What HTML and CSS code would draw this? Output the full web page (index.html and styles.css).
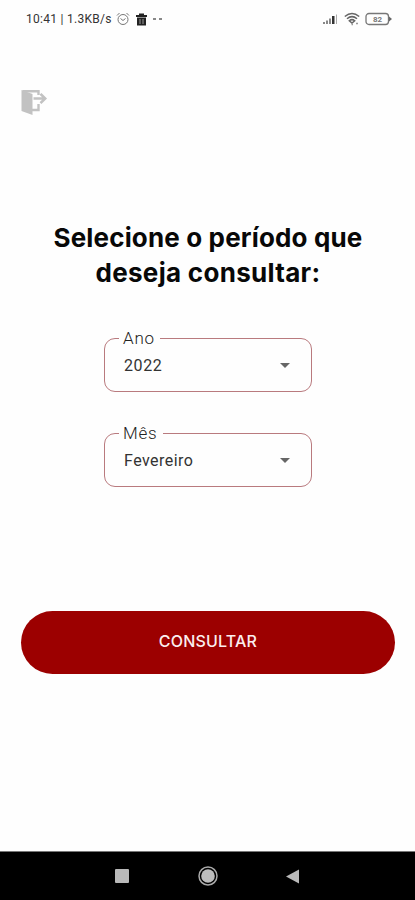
FILE: index.html
```html
<!DOCTYPE html>
<html lang="pt-BR">
<head>
<meta charset="utf-8">
<meta name="viewport" content="width=device-width, initial-scale=1">
<title>Consultar período</title>
<link rel="stylesheet" href="styles.css">
</head>
<body>
<div class="screen">
  <header class="status">
    <span class="clock">10:41 | 1.3KB/s</span>
    <svg class="alarm" width="14" height="14" viewBox="0 0 14 14" fill="none" stroke="#777" stroke-width="1"><circle cx="7" cy="7.5" r="5"/><path d="M1 3.5 3.5 1M13 3.5 10.5 1M4.5 6.5 7 8.5 9.5 6.5"/></svg>
    <svg class="trash" width="11" height="13" viewBox="0 0 11 13"><path fill="#222" d="M0 2h3V.5h5V2h3v2H0zM1 4.500h9V12.500H1z"/><path stroke="#999" d="M4 6v5M7 6v5"/></svg>
    <span class="dots"><i></i><i></i></span>
    <span class="grow"></span>
    <svg width="16" height="12" viewBox="0 0 16 12"><path fill="#888" d="M1 9h2v2H1zM4 7.500h2V11H4zM7 5.500h2V11H7z"/><path fill="#333" d="M10 3h2.500v8H10z"/><path fill="#aaa" d="M14 1.500h1V11h-1z"/></svg>
    <svg class="wifi" width="16" height="14" viewBox="0 0 16 14" fill="none" stroke="#666" stroke-width="1.500"><path d="M.8 4.500Q8-1.500 15.200 4.500M3 6.800Q8 2.500 13 6.800M5.300 8.800Q8 6.500 10.700 8.800L8 11z"/><path stroke="#999" d="M7.500 12.500h1.500M12 11.500h2"/></svg>
    <span class="battery"><b>82</b><svg width="28" height="14" viewBox="0 0 28 14" fill="none" stroke="#777" stroke-width="1.300"><rect x="1" y="1.500" width="22.500" height="11" rx="3"/><path fill="#666" stroke="none" d="M24 4.500 27 7 24 9.500z"/></svg></span>
  </header>
  <main>
    <button class="exit" aria-label="Sair"><svg width="27" height="27" viewBox="0 0 27 27"><path fill="#c2c2c2" d="M.5 1 11.500 5V26L.5 22z"/><path fill="none" stroke="#c2c2c2" stroke-width="2.400" d="M1.500 2.200H17.500V6M17.500 15V21H11"/><path fill="none" stroke="#c2c2c2" stroke-width="2.600" d="M12.500 9.500H24M19.500 4.800 24.200 9.500 19.500 14.200"/></svg></button>
    <h1><span class="l1">Selecione o período que</span><span class="l2">deseja consultar:</span></h1>
    <form class="fields">
      <fieldset><legend>Ano</legend><div class="select"><span class="year">2022</span><i class="arrow"></i></div></fieldset>
      <fieldset><legend>Mês</legend><div class="select"><span class="month">Fevereiro</span><i class="arrow"></i></div></fieldset>
    </form>
    <button class="submit"><span>CONSULTAR</span></button>
  </main>
  <nav>
    <svg width="14" height="14"><rect width="14" height="14" rx="1" fill="#b9b9b9"/></svg>
    <svg width="20" height="20" viewBox="0 0 20 20"><circle cx="10" cy="10" r="9" fill="none" stroke="#aaa" stroke-width="1.500"/><circle cx="10" cy="10" r="6.800" fill="#bdbdbd"/></svg>
    <svg width="14" height="15"><path d="M0 7.500 13 .5V14.500z" fill="#b9b9b9"/></svg>
  </nav>
</div>
</body>
</html>
```
FILE: styles.css
```css
* { box-sizing: border-box; }
body { margin: 0; background: #fefefe; font-family: Roboto, sans-serif; }
button { border: 0; padding: 0; background: none; font: inherit; display: block; }
svg { display: block; flex: none; }
.screen { width: 415px; height: 900px; display: flex; flex-direction: column; }
.status { height: 38px; padding: 0 22px 0 26px; display: flex; align-items: center; }
.clock { font-size: 12px; letter-spacing: .28px; color: #333; width: 86px; white-space: nowrap; }
.alarm { margin-left: 4px; }
.trash { margin-left: 6px; }
.dots { display: flex; gap: 3px; margin-left: 6px; }
.dots i { width: 3px; height: 2px; background: #888; }
.grow { flex: 1; }
.wifi { margin-left: 6px; }
.battery { display: grid; margin-left: 5px; align-items: center; }
.battery > * { grid-area: 1 / 1; }
.battery b { font-size: 8px; color: #777; padding-left: 8px; }
main { flex: 1; padding: 51px 20px 0 21px; }
.exit { height: 27px; }
h1 { margin: 104px 0 0; font: 700 26px/35px Inter, sans-serif; color: #080808; text-align: center; }
h1 span { display: block; white-space: nowrap; }
.l1 { letter-spacing: .15px; }
.l2 { letter-spacing: .3px; }
.fields { width: 208px; margin: 38px auto 0; display: grid; gap: 31px; }
fieldset { min-width: 0; height: 64px; margin: 0; padding: 0 21px 0 14px; border: 1px solid #b97a7e; border-radius: 11px; }
legend { height: 20px; padding: 0 5px 0 4px; font: 300 17px/20px Roboto, sans-serif; letter-spacing: .8px; color: #222; }
.select { height: 35px; padding-left: 5px; display: flex; justify-content: space-between; align-items: center; font-size: 16px; color: #333; }
.year { letter-spacing: .6px; }
.month { letter-spacing: .45px; }
.arrow { width: 10px; height: 5px; background: #666; clip-path: polygon(0 0, 100% 0, 50% 100%); }
.submit { width: 374px; height: 63px; margin-top: 124px; border-radius: 32px; background: #9c0000; color: #fbeeee; font: 500 16px/59px Inter, sans-serif; letter-spacing: .2px; padding-bottom: 3px; }
nav { height: 49px; background: #000; border-top: 1px solid #777; padding: 0 115px 0 115px; display: flex; justify-content: space-between; align-items: center; }
```
